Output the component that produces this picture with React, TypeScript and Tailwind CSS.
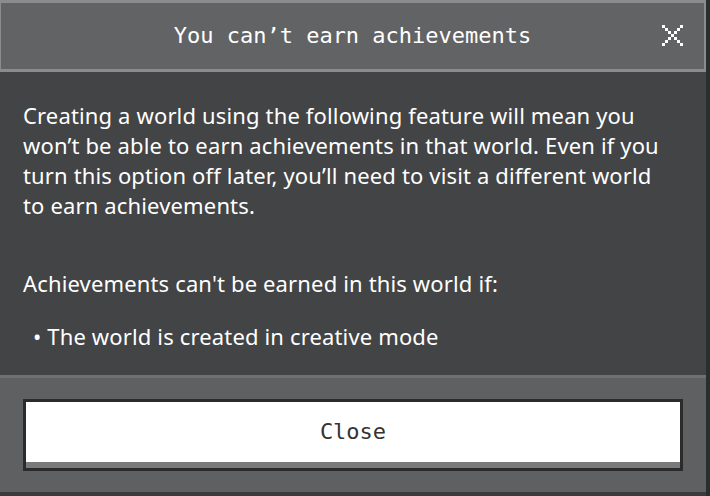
import React from 'react';

const PixelX = () => {
  const blocks = [0, 1, 2, 3, 4, 5, 6];
  return (
    <svg width="21" height="21" viewBox="0 0 21 21" shapeRendering="crispEdges">
      {blocks.map((i) => (
        <rect key={`a${i}`} x={i * 3} y={i * 3} width="3" height="3" fill="#ffffff" />
      ))}
      {blocks.map((i) => (
        <rect key={`b${i}`} x={18 - i * 3} y={i * 3} width="3" height="3" fill="#ffffff" />
      ))}
    </svg>
  );
};

const App = () => {
  return (
    <div className="w-[710px] h-[496px] flex flex-col bg-[#434446] border-r-4 border-[#2c2d2f] overflow-hidden">
      {/* header */}
      <div className="relative h-[72px] shrink-0 flex items-center justify-center bg-[#626365] border-t-[3px] border-b-[3px] border-l border-r-2 border-[#8b8c8e]">
        <h1 className="text-white text-[22px] leading-none font-['DejaVu_Sans_Mono',monospace]">
          You can’t earn achievements
        </h1>
        <button className="absolute right-[21px] top-[22px]">
          <PixelX />
        </button>
      </div>

      {/* body */}
      <div className="flex-1 pl-[23px] pr-[40px] pt-[28px] text-white text-[22px] leading-[30px] tracking-[0.15px] font-['Noto_Sans',sans-serif]">
        <p>
          Creating a world using the following feature will mean you won’t be able to earn achievements in that world. Even if you turn this option off later, you’ll need to visit a different world to earn achievements.
        </p>
        <p className="mt-[48px]">Achievements can't be earned in this world if:</p>
        <ul className="mt-[23px] pl-[10px]">
          <li>• The world is created in creative mode</li>
        </ul>
      </div>

      {/* footer */}
      <div className="h-[121px] shrink-0 bg-[#5f6062] border-t-[3px] border-[#6f7072] border-b-4 border-b-[#3a3b3d] px-[23px] pt-[21px]">
        <button className="w-full h-[72px] flex flex-col border-[3px] border-[#2b2b2b] bg-white">
          <span className="flex-1 flex items-center justify-center text-[#333333] text-[22px] leading-none font-['DejaVu_Sans_Mono',monospace]">
            Close
          </span>
          <span className="h-[6px] w-full bg-[#7a7a7b]" />
        </button>
      </div>
    </div>
  );
};

export default App;
